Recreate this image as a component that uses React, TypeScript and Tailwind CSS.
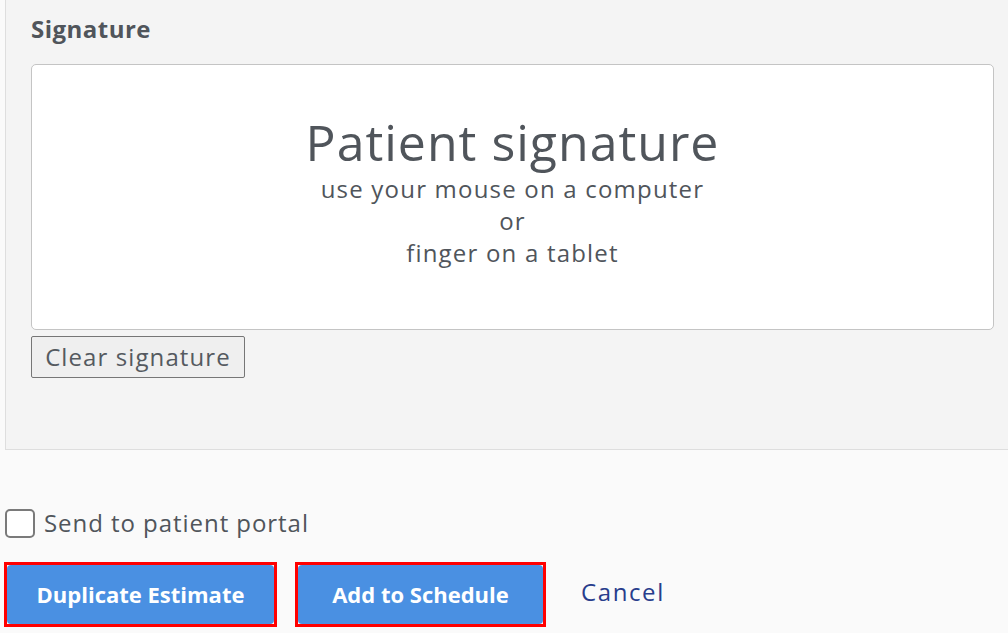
import React from "react";

const font = { fontFamily: '"Open Sans", "Liberation Sans", sans-serif' };

export default function App() {
  return (
    <div className="w-full h-[633px] bg-[#fafafa] overflow-hidden" style={font}>
      <div className="ml-[5px] h-[450px] bg-[#f4f4f4] border-l border-b border-[#dedede] pl-[25px] pr-[14px]">
        <div className="pt-[14px] text-[24px] leading-[30px] font-bold text-[#50555b] tracking-[0.02em]">Signature</div>
        <div className="mt-[20px] h-[266px] bg-white border border-[#c4c4c4] rounded-[5px] flex flex-col items-center pt-[52px] text-[#50555b]">
          <div className="text-[50px] leading-[50px] tracking-[1px]">Patient signature</div>
          <div className="text-[24px] leading-[32px] mt-[6px] tracking-[1.2px]">use your mouse on a computer</div>
          <div className="text-[24px] leading-[32px] tracking-[1.2px]">or</div>
          <div className="text-[24px] leading-[32px] tracking-[1.2px]">finger on a tablet</div>
        </div>
        <button className="mt-[6px] h-[42px] w-[214px] bg-[#efefef] border border-[#767676] rounded-[2px] text-[24px] tracking-[1.1px] text-[#555a60] flex items-center justify-center">
          Clear signature
        </button>
      </div>
      <div className="mt-[55px] ml-[5px] flex items-center gap-[9px]">
        <span className="w-[30px] h-[29px] border-2 border-[#7a7a7a] rounded-[5px] bg-white" />
        <span className="text-[24px] text-[#50555b] tracking-[0.95px]">Send to patient portal</span>
      </div>
      <div className="mt-[21px] ml-[4px] flex items-center">
        <div className="border-[3px] border-[#ff0000] w-[273px] h-[65px]">
          <button className="w-full h-full bg-[#4a90e2] rounded-[4px] text-white font-bold text-[22px]">Duplicate Estimate</button>
        </div>
        <div className="ml-[18px] border-[3px] border-[#ff0000] w-[251px] h-[65px]">
          <button className="w-full h-full bg-[#4a90e2] rounded-[4px] text-white font-bold text-[22px]">Add to Schedule</button>
        </div>
        <span className="ml-[35px] mb-[6px] text-[24px] text-[#283d8c] tracking-[1.6px]">Cancel</span>
      </div>
    </div>
  );
}
